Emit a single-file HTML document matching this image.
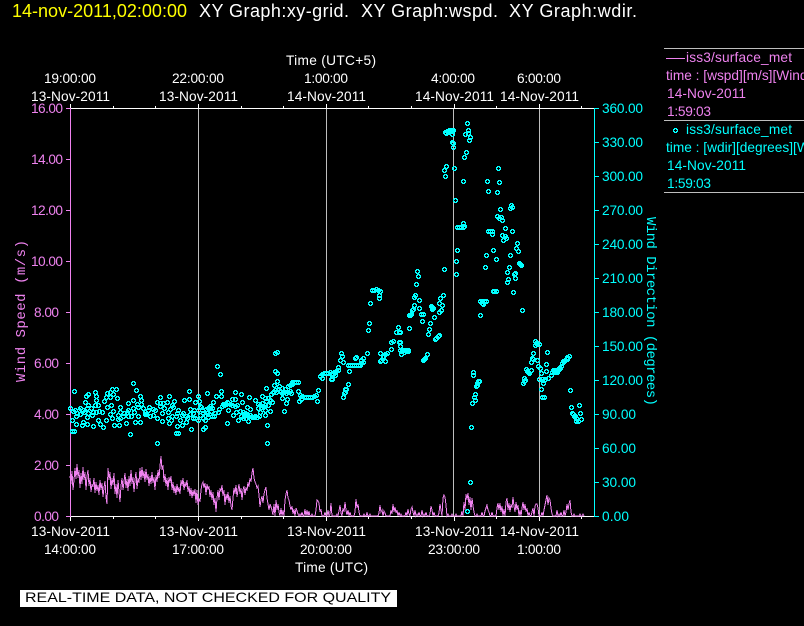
<!DOCTYPE html>
<html><head><meta charset="utf-8"><title>XY Graph</title>
<style>
html,body{margin:0;padding:0;background:#000;width:804px;height:626px;overflow:hidden}
svg{display:block}
text{font-family:"Liberation Sans",sans-serif;font-size:13.7px;fill:#fff;white-space:pre}
.t{font-size:18px}
.m{fill:#ee82ee}
.c{fill:#0ff}
.r{font-family:"Liberation Mono",monospace;font-size:14px}
</style></head><body>
<svg width="804" height="626" viewBox="0 0 804 626" xmlns="http://www.w3.org/2000/svg">
<defs>
<marker id="o" markerUnits="userSpaceOnUse" markerWidth="5" markerHeight="5" refX="2" refY="2" viewBox="0 0 5 5">
<path shape-rendering="crispEdges" fill="#0ff" fill-rule="evenodd" d="M1 0h3v1h1v3h-1v1h-3v-1h-1v-3h1zM2 1v1h-1v1h1v1h1v-1h1v-1h-1v-1z"/>
</marker>
</defs>
<rect width="804" height="626" fill="#000"/>

<text class="t" x="12" y="17" style="fill:#ff0" textLength="175">14-nov-2011,02:00:00</text>
<text class="t" x="199" y="17" textLength="150">XY Graph:xy-grid.</text>
<text class="t" x="361" y="17" textLength="137">XY Graph:wspd.</text>
<text class="t" x="509" y="17" textLength="128">XY Graph:wdir.</text>

<text x="286" y="65" textLength="90">Time (UTC+5)</text>
<text x="44" y="83" textLength="52">19:00:00</text>
<text x="31" y="101" textLength="79">13-Nov-2011</text>
<text x="172" y="83" textLength="52">22:00:00</text>
<text x="159" y="101" textLength="79">13-Nov-2011</text>
<text x="304" y="83" textLength="44">1:00:00</text>
<text x="287" y="101" textLength="79">14-Nov-2011</text>
<text x="431" y="83" textLength="44">4:00:00</text>
<text x="415" y="101" textLength="79">14-Nov-2011</text>
<text x="517" y="83" textLength="44">6:00:00</text>
<text x="500" y="101" textLength="79">14-Nov-2011</text>

<g shape-rendering="crispEdges">
<path stroke="#bebebe" d="M198.5 109V516M326.5 109V516M453.5 109V516M539.5 109V516"/>
<path stroke="#fff" fill="none" d="M70 108.5H595M70 516.5H595"/>
<path stroke="#fff" d="M70.5 104V108M113.5 106V108M155.5 106V108M198.5 104V108M241.5 106V108M283.5 106V108M326.5 104V108M368.5 106V108M411.5 106V108M454.5 104V108M496.5 106V108M539.5 104V108M581.5 106V108"/>
<path stroke="#fff" d="M70.5 517V521M113.5 517V519M155.5 517V519M198.5 517V521M241.5 517V519M283.5 517V519M326.5 517V521M368.5 517V519M411.5 517V519M454.5 517V521M496.5 517V519M539.5 517V521M581.5 517V519"/>
<path stroke="#ee82ee" d="M70.5 108V517M66 108.5H70M66 159.5H70M66 210.5H70M66 261.5H70M66 312.5H70M66 363.5H70M66 414.5H70M66 465.5H70M66 516.5H70"/>
<path stroke="#0ff" d="M594.5 108V517M595 108.5H599M595 142.5H599M595 176.5H599M595 210.5H599M595 244.5H599M595 278.5H599M595 312.5H599M595 346.5H599M595 380.5H599M595 414.5H599M595 448.5H599M595 482.5H599M595 516.5H599"/>
<path stroke="#bebebe" d="M664 48.5H804M664 120.5H804M664 192.5H804"/>
<path stroke="#ee82ee" d="M666 58.5H685"/>
</g>

<g class="m">
<text class="m" x="31" y="113" textLength="32">16.00</text>
<text class="m" x="31" y="164" textLength="32">14.00</text>
<text class="m" x="31" y="215" textLength="32">12.00</text>
<text class="m" x="31" y="266" textLength="32">10.00</text>
<text class="m" x="34" y="317" textLength="25">8.00</text>
<text class="m" x="34" y="368" textLength="25">6.00</text>
<text class="m" x="34" y="419" textLength="25">4.00</text>
<text class="m" x="34" y="470" textLength="25">2.00</text>
<text class="m" x="34" y="521" textLength="25">0.00</text>
</g>
<g>
<text class="c" x="602" y="113" textLength="41">360.00</text>
<text class="c" x="602" y="147" textLength="41">330.00</text>
<text class="c" x="602" y="181" textLength="41">300.00</text>
<text class="c" x="602" y="215" textLength="41">270.00</text>
<text class="c" x="602" y="249" textLength="41">240.00</text>
<text class="c" x="602" y="283" textLength="41">210.00</text>
<text class="c" x="602" y="317" textLength="41">180.00</text>
<text class="c" x="602" y="351" textLength="41">150.00</text>
<text class="c" x="602" y="385" textLength="41">120.00</text>
<text class="c" x="602" y="419" textLength="34">90.00</text>
<text class="c" x="602" y="453" textLength="34">60.00</text>
<text class="c" x="602" y="487" textLength="34">30.00</text>
<text class="c" x="602" y="521" textLength="27">0.00</text>
</g>

<text class="m r" transform="translate(25,382) rotate(-90)" textLength="142">Wind Speed (m/s)</text>
<text class="c r" transform="translate(647,217) rotate(90)" textLength="189">Wind Direction (degrees)</text>

<polyline fill="none" stroke="#ee82ee" stroke-width="1" shape-rendering="crispEdges" points="70,476 71,484 72,471 73,490 74,480 75,468 76,479 77,464 78,478 79,470 80,488 81,473 82,484 83,467 84,480 85,472 86,490 87,476 88,470 89,486 90,478 91,492 92,484 93,487 94,478 95,493 96,482 97,491 98,485 99,495 100,480 101,490 102,483 103,497 104,488 105,481 106,497 107,504 108,468 109,480 110,472 111,489 112,478 113,485 114,473 115,494 116,484 117,498 118,480 119,492 120,502 121,486 122,478 123,490 124,482 125,473 126,488 127,479 128,491 129,476 130,486 131,470 132,484 133,477 134,492 135,480 136,472 137,489 138,478 139,483 140,468 141,480 142,467 143,478 144,471 145,482 146,469 147,480 148,474 149,486 150,476 151,484 152,472 153,483 154,477 155,490 156,475 157,482 158,470 159,478 160,466 161,456 162,470 163,465 164,482 165,474 166,486 167,478 168,490 169,477 170,483 171,476 172,490 173,482 174,493 175,486 176,495 177,484 178,492 179,487 180,494 181,480 182,486 183,478 184,490 185,482 186,487 187,480 188,492 189,486 190,496 191,488 192,498 193,490 194,496 195,489 196,503 197,490 198,505 199,498 200,502 201,490 202,484 203,482 204,488 205,483 206,495 207,484 208,490 209,486 210,497 211,490 212,500 213,492 214,505 215,498 216,512 217,498 218,490 219,500 220,488 221,492 222,485 223,496 224,490 225,505 226,494 227,500 228,492 229,503 230,496 231,506 232,510 233,498 234,488 235,494 236,485 237,497 238,490 239,484 240,494 241,488 242,500 243,490 244,486 245,495 246,487 247,491 248,482 249,487 250,478 251,482 252,473 253,468 254,478 255,482 256,484 257,488 258,486 259,495 260,507 261,500 262,496 263,503 264,494 265,490 266,487 267,498 268,504 269,510 270,504 271,507 272,510 273,515 274,504 275,516 276,500 277,510 278,504 279,512 280,516 281,508 282,516 283,510 284,516 285,500 286,494 287,490 288,498 289,500 290,506 291,510 292,506 293,514 294,509 295,516 296,508 297,511 298,514 299,516 300,514 301,516 302,512 303,516 304,516 305,509 306,516 307,510 308,516 309,511 310,516 311,516 312,514 313,516 314,516 315,516 316,510 317,500 318,501 319,503 320,512 321,509 322,516 323,516 324,516 325,512 326,516 327,516 328,510 329,516 330,514 331,503 332,516 333,516 334,516 335,516 336,516 337,514 338,516 339,511 340,505 341,513 342,516 343,508 344,512 345,502 346,510 347,515 348,510 349,516 350,512 351,516 352,516 353,516 354,516 355,512 356,499 357,508 358,504 359,512 360,516 361,516 362,516 363,516 364,514 365,516 366,516 367,513 368,516 369,516 370,514 371,516 372,516 373,516 374,516 375,516 376,516 377,516 378,516 379,513 380,505 381,512 382,510 383,516 384,511 385,513 386,516 387,516 388,516 389,516 390,516 391,510 392,514 393,504 394,512 395,507 396,513 397,510 398,516 399,512 400,516 401,514 402,516 403,516 404,516 405,516 406,512 407,516 408,509 409,514 410,516 411,509 412,507 413,512 414,516 415,510 416,516 417,514 418,516 419,512 420,516 421,516 422,510 423,516 424,514 425,516 426,512 427,516 428,516 429,516 430,514 431,506 432,510 433,516 434,512 435,516 436,516 437,516 438,516 439,513 440,504 441,510 442,516 443,498 444,495 445,497 446,505 447,516 448,514 449,516 450,516 451,516 452,514 453,516 454,516 455,516 456,514 457,516 458,516 459,516 460,516 461,516 462,511 463,516 464,502 465,510 466,494 467,500 468,493 469,505 470,497 471,510 472,498 473,506 474,512 475,516 476,516 477,514 478,516 479,516 480,516 481,516 482,512 483,516 484,516 485,511 486,508 487,505 488,510 489,512 490,516 491,516 492,512 493,516 494,516 495,516 496,516 497,508 498,503 499,510 500,503 501,512 502,506 503,516 504,509 505,516 506,502 507,498 508,510 509,503 510,512 511,504 512,508 513,497 514,506 515,512 516,502 517,510 518,505 519,516 520,510 521,516 522,508 523,502 524,510 525,504 526,512 527,508 528,516 529,512 530,516 531,516 532,512 533,508 534,516 535,506 536,504 537,504 538,508 539,516 540,516 541,516 542,512 543,516 544,510 545,505 546,500 547,495 548,505 549,498 550,500 551,508 552,514 553,516 554,516 555,516 556,516 557,510 558,516 559,514 560,516 561,512 562,516 563,516 564,510 565,516 566,512 567,504 568,510 569,504 570,500 571,512 572,516 573,516 574,514 575,516 576,516 577,516 578,516 579,516 580,514 581,516 582,516 583,514 584,516"/>

<polyline fill="none" stroke="none" marker-start="url(#o)" marker-mid="url(#o)" marker-end="url(#o)" points="
467,123 468,130 468,133 465,134 470,137 469,140 466,152 464,157 498,168 463,181 487,181 499,182 488,191 497,192 455,200 511,205 512,207 510,208 500,209 497,216 501,217 499,218 502,220 463,223 457,227 459,227 461,227 463,227 464,226 505,228 512,231 488,231 490,231 492,231 492,234 502,235 505,236 506,238 503,240 517,243 516,248 518,251 457,250 493,250 486,255 510,255 456,261 496,259 519,263 520,264 521,265 485,267 509,267 507,272 515,273 514,274 515,278 508,279 507,282 456,274 444,269 417,271 418,276 416,284 415,295 414,297 419,300 443,295 440,298 439,303 442,305 441,310 439,312 414,305 419,308 432,307 433,308 431,306 432,309 412,310 413,309 410,315 411,314 409,315 480,301 482,301 484,301 486,301 482,303 483,304 494,291 496,291 493,291 513,292 522,310 445,132 447,131 449,130 451,130 453,130 446,133 448,132 450,131 452,131 452,134 452,142 453,143 453,147 446,166 444,170 454,168 445,176
480,315 421,314 423,314 422,321 434,317 430,323 429,329 428,334 409,328 400,332 438,336 436,338 435,339 439,335 400,342 400,350 402,350 404,350 406,350 408,350 404,352 402,351 401,354 408,351 427,354 425,358 424,359 423,360
473,372 473,375 479,381 478,381 477,383 477,385 476,386 475,394 474,397 475,400 472,403 471,427 535,341 536,343 535,345 537,343 539,344 547,352 533,353 532,358 533,359 537,360 531,362 546,364 538,366 540,368 526,369 527,371 528,372 529,373 531,370 546,371 541,373 551,375 524,378 539,379 525,380 523,383 524,381 543,383 548,378 545,379 544,380 542,379 541,389 542,397 544,397 569,356 567,359 565,360 563,361 562,363 561,366 560,368 558,370 556,370 554,370 552,372 570,390 571,407 579,405 580,413 572,413 573,414 574,416 575,416 576,418 577,419 578,421 576,421 581,419 567,357 564,361 559,368 557,372 555,372 553,370
349,371 318,390 300,395 302,396 304,397 306,397 308,397 310,397 312,397 314,396 316,395 317,401 299,401 301,399 348,384 346,389 343,397 344,393 345,392 345,389 320,376 322,374 324,373 326,373 328,373 330,372 332,373 334,372 336,371 338,370 331,379 322,378 470,482 467,511
275,353 277,352 217,366 220,374 275,371 277,373 341,353 342,356 340,360 343,362 338,367 356,357 348,365 350,365 352,365 354,365 356,365 358,365 360,365 363,362 361,363 355,358 367,353 379,295 379,298 372,290 374,290 376,289 378,290 380,291 370,303 369,323 368,330 398,327 396,332 399,332 393,341 391,342 399,342 400,346 404,350 406,350 391,349 387,353 385,354 383,356 380,353 383,357 385,361 380,361 381,360 363,358 361,360 335,372 333,374 332,375 332,379 338,370 335,375
277,381 274,385 279,386 280,391 288,386 292,382 294,382 296,382 298,382 290,385 292,384 282,393 284,392 286,393 288,392 290,391 291,393 282,398 287,399 286,403 298,391 284,411 267,425 267,443 266,388 273,392 271,394 272,402 262,396 265,398 255,400 249,397 241,394 235,392 221,391 207,393 216,396 221,396 213,402 227,402 232,399 235,399 242,402 237,405 228,410 201,407 210,408 218,412 214,416 207,413 203,418 205,420 203,429 205,427 227,423 238,420 243,418 248,421 250,415 247,407 250,409 255,416 258,408 262,403 268,405 265,410 270,411 265,415 260,412 233,415 236,412 223,404 210,406 212,408 211,411 209,414 205,415 203,413 208,417 212,416 215,413 219,409 222,406 224,405 226,404 228,403 230,404 232,405 235,406 240,411 243,412 245,413 247,414 248,416 246,418 244,416 241,416 252,417 254,417 257,417 259,416 261,407 263,406 265,405 260,405 258,404 275,390 276,392 278,389 282,388 285,389 283,392 270,400 268,398 266,401
133,383 74,391 88,394 95,392 86,396 96,396 96,400 85,402 98,405 112,389 116,389 107,393 110,397 117,398 104,401 136,390 140,396 141,400 133,400 128,403 138,407 143,408 120,407 111,405 107,407 113,411 102,412 93,412 88,405 80,408 73,411 77,413 70,408 72,420 76,424 82,425 87,424 93,426 83,422 87,417 72,431 74,431 98,420 100,424 103,427 114,425 119,425 118,419 123,416 126,423 130,434 157,443 176,433 178,433 177,426 182,425 186,422 191,429 203,429 205,427 169,423 171,420 162,421 157,418 153,415 145,414 140,422 135,422 131,416 118,415 127,412 148,410 153,409 160,397 169,396 174,401 184,400 189,399 189,391 207,393 198,396 199,401 195,402 201,407 157,402 164,408 173,407 190,409 177,413 183,413 193,413 200,415 208,408 207,413 205,420 187,418 193,418 168,418 160,403 163,403
75,410 79,410 83,410 87,408 91,408 95,405 99,411 76,416 80,414 84,412 88,413 92,415 96,412 106,397 110,392 113,394 120,412 124,413 128,416 133,408 137,404 141,404 134,412 138,416 145,412 149,407 155,410 160,406 167,402 172,405 178,410 182,415 186,416 190,414 194,410 198,410 202,410 206,409 168,412 172,416 176,416 180,420 110,414 106,420 112,418 120,418 128,410 150,416 146,414 162,413 170,409 195,418 198,420 200,406
"/>

<text class="m" x="686" y="62" textLength="106">iss3/surface_met</text>
<text class="m" x="666" y="80">time : [wspd][m/s][Wind Speed]</text>
<text class="m" x="667" y="98" textLength="79">14-Nov-2011</text>
<text class="m" x="667" y="116" textLength="44">1:59:03</text>
<polyline fill="none" stroke="none" marker-start="url(#o)" points="675,130 675,130"/>
<text class="c" x="686" y="134" textLength="106">iss3/surface_met</text>
<text class="c" x="666" y="152">time : [wdir][degrees][Wind Direction]</text>
<text class="c" x="667" y="170" textLength="79">14-Nov-2011</text>
<text class="c" x="667" y="188" textLength="44">1:59:03</text>

<text x="31" y="536" textLength="79">13-Nov-2011</text>
<text x="44" y="554" textLength="52">14:00:00</text>
<text x="159" y="536" textLength="79">13-Nov-2011</text>
<text x="172" y="554" textLength="52">17:00:00</text>
<text x="287" y="536" textLength="79">13-Nov-2011</text>
<text x="300" y="554" textLength="52">20:00:00</text>
<text x="415" y="536" textLength="79">13-Nov-2011</text>
<text x="428" y="554" textLength="52">23:00:00</text>
<text x="500" y="536" textLength="79">14-Nov-2011</text>
<text x="517" y="554" textLength="44">1:00:00</text>
<text x="295" y="572" textLength="73">Time (UTC)</text>

<rect x="20" y="590" width="377" height="17" fill="#fff" shape-rendering="crispEdges"/>
<text x="25" y="602" style="fill:#000;font-size:14px" textLength="366" lengthAdjust="spacingAndGlyphs">REAL-TIME DATA, NOT CHECKED FOR QUALITY</text>
</svg>
</body></html>
